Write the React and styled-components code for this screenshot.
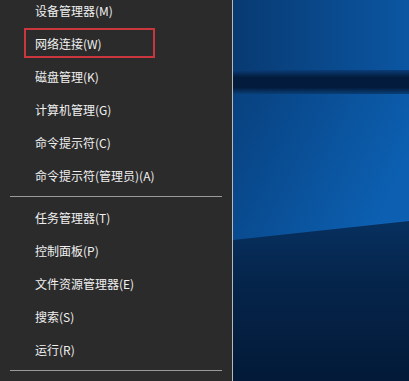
import styled, { createGlobalStyle } from "styled-components";

const GlobalStyle = createGlobalStyle`
  html, body {
    margin: 0;
    padding: 0;
    background: #2b2b2b;
    overflow: hidden;
  }
`;

const Screen = styled.div`
  display: flex;
  width: 409px;
  height: 381px;
  overflow: hidden;
`;

const Menu = styled.nav`
  width: 232px;
  flex: none;
  background: #2b2b2b;
  border-right: 1px solid #b9b9b9;
  overflow: hidden;
`;

const List = styled.ul`
  list-style: none;
  margin: -6px 0 0;
  padding: 0;
`;

const Item = styled.li`
  position: relative;
  height: 33px;
  display: flex;
  align-items: center;
  padding-left: 35px;
  color: #f0f0f0;
  font-family: "Noto Sans CJK SC", "Noto Sans", sans-serif;
  font-size: 12px;
  white-space: nowrap;

  ${(p) =>
    p.$marked &&
    `
    &::after {
      content: "";
      position: absolute;
      left: 24px;
      top: 1px;
      width: 131px;
      height: 30px;
      box-sizing: border-box;
      border: 2px solid #c9363e;
    }
  `}
`;

const Separator = styled.li`
  height: 9px;
  margin: 0 10px;
  display: flex;
  align-items: center;

  &::before {
    content: "";
    flex: 1;
    height: 1px;
    background: #9a9a9a;
  }
`;

const Wallpaper = styled.div`
  flex: 1;
  position: relative;
  background: #06284f;

  svg {
    display: block;
    width: 100%;
    height: 100%;
  }
`;

const groups = [
  [
    { label: "设备管理器(M)" },
    { label: "网络连接(W)", marked: true },
    { label: "磁盘管理(K)" },
    { label: "计算机管理(G)" },
    { label: "命令提示符(C)" },
    { label: "命令提示符(管理员)(A)" },
  ],
  [
    { label: "任务管理器(T)" },
    { label: "控制面板(P)" },
    { label: "文件资源管理器(E)" },
    { label: "搜索(S)" },
    { label: "运行(R)" },
  ],
];

const Desktop = () => (
  <Wallpaper>
    <svg viewBox="0 0 176 381" preserveAspectRatio="none">
      <defs>
        <linearGradient id="top" x1="0" y1="0" x2="1" y2="0">
          <stop offset="0" stopColor="#083a72" />
          <stop offset="1" stopColor="#0b56a2" />
        </linearGradient>
        <linearGradient id="mid" x1="0" y1="0" x2="1" y2="0.4">
          <stop offset="0" stopColor="#08417f" />
          <stop offset="1" stopColor="#0c5fb1" />
        </linearGradient>
        <linearGradient id="band" x1="0" y1="0" x2="0" y2="1">
          <stop offset="0" stopColor="#0a3d78" />
          <stop offset="0.3" stopColor="#031b3c" />
          <stop offset="0.7" stopColor="#031b3c" />
          <stop offset="1" stopColor="#0a447f" />
        </linearGradient>
        <linearGradient id="low" x1="0" y1="0" x2="0" y2="1">
          <stop offset="0" stopColor="#07305f" />
          <stop offset="0.4" stopColor="#05244a" />
          <stop offset="1" stopColor="#031a38" />
        </linearGradient>
        <linearGradient id="beam" x1="0" y1="0" x2="1" y2="0">
          <stop offset="0" stopColor="#0a4a8e" stopOpacity="0" />
          <stop offset="1" stopColor="#1a6fc4" stopOpacity="0.8" />
        </linearGradient>
      </defs>
      <rect x="0" y="0" width="176" height="72" fill="url(#top)" />
      <rect x="0" y="70" width="176" height="25" fill="url(#band)" />
      <rect x="0" y="94" width="176" height="146" fill="url(#mid)" />
      <polygon points="0,240 176,220 176,235 0,250" fill="url(#beam)" opacity="0.5" />
      <polygon points="0,240 176,221 176,381 0,381" fill="url(#low)" />
    </svg>
  </Wallpaper>
);

export default function App() {
  return (
    <>
      <GlobalStyle />
      <Screen>
        <Menu>
          <List>
            {groups.map((group, gi) => [
              ...group.map((item) => (
                <Item key={item.label} $marked={item.marked}>
                  {item.label}
                </Item>
              )),
              <Separator key={`sep-${gi}`} />,
            ])}
          </List>
        </Menu>
        <Desktop />
      </Screen>
    </>
  );
}
